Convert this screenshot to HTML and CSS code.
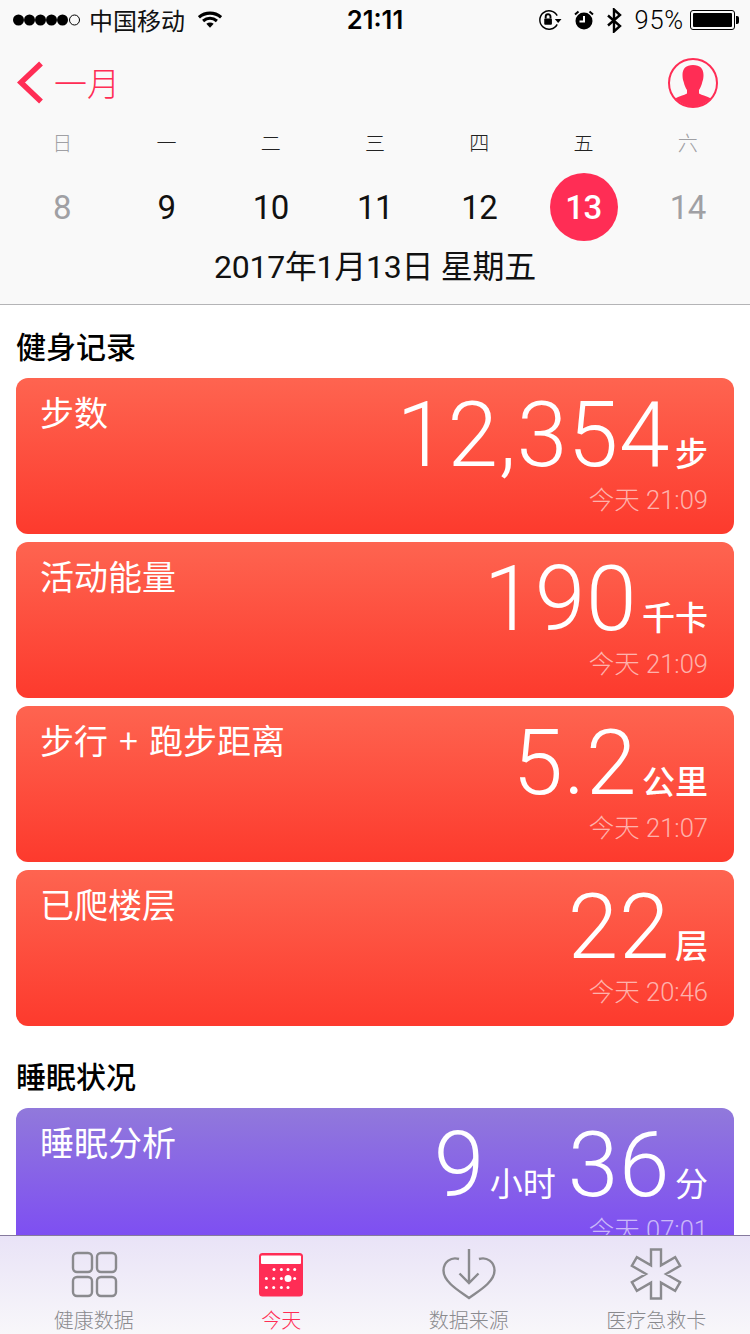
FILE: index.html
```html
<!DOCTYPE html>
<html lang="zh">
<head>
<meta charset="utf-8">
<title>健康</title>
<link rel="stylesheet" href="styles.css">
</head>
<body>
<div class="app">
  <header class="header">
    <div class="status">
      <div class="status-left">
        <svg class="signal" width="68" height="12" viewBox="0 0 68 12"><circle cx="5.500" cy="6" r="5.500"/><circle cx="16.500" cy="6" r="5.500"/><circle cx="27.500" cy="6" r="5.500"/><circle cx="38.500" cy="6" r="5.500"/><circle cx="49.500" cy="6" r="5.500"/><circle class="hollow" cx="61.500" cy="6" r="5"/></svg>
        <span class="carrier">中国移动</span>
        <svg class="wifi" width="24" height="18" viewBox="0 0 26 19"><path d="M1 6.500C8 .5 18 .5 25 6.500" /><path d="M5.500 10.500C10 6.800 16 6.800 20.500 10.500"/><path class="fill" d="M9 13.500C11.500 11.800 14.500 11.800 17 13.500L13 18Z"/></svg>
      </div>
      <div class="clock">21:11</div>
      <div class="status-right">
        <svg width="24" height="22" viewBox="0 0 25 22" class="ic"><path class="thin" d="M20 6.500A9.600 9.600 0 1 0 20 15.500"/><path class="fill" d="M17.500 10h7l-3.500 4z"/><rect class="fill" x="6.500" y="9.500" width="8" height="6.500" rx="1"/><path class="thin2" d="M8 9.500V7.500a2.500 2.500 0 0 1 5 0v2"/></svg>
        <svg width="20" height="20" viewBox="0 0 20 20" class="ic"><circle class="fill" cx="10" cy="11" r="8.500"/><path class="white" d="M10 6v5.500H5.500"/><path class="thin2" d="M1 4.500L4.500 1.500M19 4.500L15.500 1.500"/></svg>
        <svg width="16" height="25" viewBox="0 0 16 25" class="ic"><path class="thin3" d="M2 7.500L14 18 8 23.500V1.500L14 7 2 17.500"/></svg>
        <span class="battery-text">95%</span>
        <div class="battery"><div class="battery-body"><div class="battery-level"></div></div><div class="battery-tip"></div></div>
      </div>
    </div>
    <div class="nav">
      <div class="back">
        <svg width="28" height="44" viewBox="0 0 28 44"><path d="M25 2.500L5 21.500 25 40.500"/></svg>
        <span>一月</span>
      </div>
      <svg class="avatar" width="52" height="52" viewBox="0 0 52 52"><defs><clipPath id="av"><circle cx="26" cy="26" r="23.500"/></clipPath></defs><circle class="ring" cx="26" cy="26" r="24"/><path class="person" clip-path="url(#av)" d="M26 8c7 0 10.500 3.500 10.500 10 0 3-.5 5-1.200 7-.8 3.500-2 6-3.300 8v3.500c3 1.800 8 2.800 12 5V52H8V41.500c4-2.200 9-3.200 12-5V33c-1.300-2-2.500-4.500-3.300-8-.7-2-1.200-4-1.200-7 0-6.500 3.500-10 10.500-10z"/></svg>
    </div>
    <div class="week">
      <span class="muted">日</span><span>一</span><span>二</span><span>三</span><span>四</span><span>五</span><span class="muted">六</span>
    </div>
    <div class="days">
      <span class="day muted">8</span><span class="day">9</span><span class="day">10</span><span class="day">11</span><span class="day">12</span><span class="day"><b class="today">13</b></span><span class="day muted">14</span>
    </div>
    <div class="full-date">2017年1月13日 星期五</div>
  </header>

  <main class="content">
    <h2 class="section">健身记录</h2>
    <div class="cards">
      <article class="card red">
        <div class="card-title">步数</div>
        <div class="card-data">
          <div class="value"><span class="num">12,354</span><span class="unit">步</span></div>
          <div class="time">今天 21:09</div>
        </div>
      </article>
      <article class="card red">
        <div class="card-title">活动能量</div>
        <div class="card-data">
          <div class="value"><span class="num">190</span><span class="unit">千卡</span></div>
          <div class="time">今天 21:09</div>
        </div>
      </article>
      <article class="card red">
        <div class="card-title">步行 + 跑步距离</div>
        <div class="card-data">
          <div class="value"><span class="num">5.2</span><span class="unit">公里</span></div>
          <div class="time">今天 21:07</div>
        </div>
      </article>
      <article class="card red">
        <div class="card-title">已爬楼层</div>
        <div class="card-data">
          <div class="value"><span class="num">22</span><span class="unit">层</span></div>
          <div class="time">今天 20:46</div>
        </div>
      </article>
    </div>
    <h2 class="section second">睡眠状况</h2>
    <div class="cards">
      <article class="card purple">
        <div class="card-title">睡眠分析</div>
        <div class="card-data">
          <div class="value"><span class="num">9</span><span class="unit">小时</span><span class="num gap">36</span><span class="unit">分</span></div>
          <div class="time">今天 07:01</div>
        </div>
      </article>
    </div>
  </main>

  <nav class="tabbar">
    <div class="tab">
      <svg width="52" height="52" viewBox="0 0 52 52" class="tab-icon"><rect x="5" y="5" width="19" height="19" rx="4"/><rect x="29" y="5" width="19" height="19" rx="4"/><rect x="5" y="29" width="19" height="19" rx="4"/><rect x="29" y="29" width="19" height="19" rx="4"/></svg>
      <span>健康数据</span>
    </div>
    <div class="tab active">
      <svg width="52" height="52" viewBox="0 0 52 52"><rect class="cal" x="4" y="5" width="44" height="43.500" rx="3.500"/><rect class="calw" x="6" y="7.500" width="40" height="8.500" rx="1"/><g class="calw"><circle cx="19" cy="21.500" r="1.500"/><circle cx="26.400" cy="21.500" r="1.500"/><circle cx="33" cy="21.500" r="1.500"/><circle cx="39.700" cy="21.500" r="1.500"/><circle cx="11.400" cy="30.500" r="1.500"/><circle cx="18.700" cy="30.500" r="1.500"/><circle cx="26.400" cy="30.500" r="1.500"/><circle cx="33" cy="30.500" r="3.500"/><circle cx="39.700" cy="30.500" r="1.500"/><circle cx="11.400" cy="39.500" r="1.500"/><circle cx="18.700" cy="39.500" r="1.500"/><circle cx="26.400" cy="39.500" r="1.500"/><circle cx="33" cy="39.500" r="1.500"/></g></svg>
      <span>今天</span>
    </div>
    <div class="tab">
      <svg width="56" height="52" viewBox="0 0 56 52" class="tab-icon"><path d="M18 11C10 8.500 2.500 14 2.500 22.500c0 5.500 3 9.500 7 13.500 5 5 11.500 9 18.500 14 7-5 13.500-9 18.500-14 4-4 7-8 7-13.500C53.500 14 46 8.500 38 11"/><path d="M28 1V35M18.500 25.500L28 35l9.500-9.500"/></svg>
      <span>数据来源</span>
    </div>
    <div class="tab">
      <svg width="54" height="52" viewBox="0 0 54 52" class="tab-icon"><path d="M22 1.500h10V17.340L46.150 9.170l5 8.660L37 26l14.150 8.170-5 8.660L32 34.660V50.500H22V34.660L7.850 42.830l-5-8.660L17 26 2.850 17.830l5-8.660L22 17.340z"/></svg>
      <span>医疗急救卡</span>
    </div>
  </nav>
</div>
</body>
</html>
```

FILE: styles.css
```css
* { box-sizing: border-box; }
html, body { margin: 0; padding: 0; }
body {
  width: 750px;
  height: 1334px;
  overflow: hidden;
  background: #fff;
  font-family: "Noto Sans CJK SC", "Liberation Sans", sans-serif;
  color: #000;
}
.app { width: 750px; height: 1334px; display: flex; flex-direction: column; overflow: hidden; }

.header { flex: none; height: 305px; background: #f9f9f9; border-bottom: 1px solid #b4b4b6; }

.status { height: 40px; display: flex; align-items: center; justify-content: space-between; padding: 0 11px 0 13px; position: relative; }
.status-left, .status-right { display: flex; align-items: center; }
.signal { fill: #000; display: block; }
.signal .hollow { fill: none; stroke: #000; stroke-width: 1; }
.carrier { font-size: 24px; line-height: 40px; margin-left: 8px; color: #111; }
.wifi { margin-left: 13px; }
.wifi path { fill: none; stroke: #000; stroke-width: 3.400; }
.wifi path.fill { fill: #000; stroke: none; }
.clock { position: absolute; left: 0; right: 0; text-align: center; font: 600 25.500px/40px Inter, "Liberation Sans", sans-serif; }
.status-right { gap: 12px; }
.ic .fill { fill: #000; }
.ic .thin { fill: none; stroke: #000; stroke-width: 1.500; }
.ic .thin2 { fill: none; stroke: #000; stroke-width: 2; }
.ic .thin3 { fill: none; stroke: #000; stroke-width: 2.400; }
.ic .white { fill: none; stroke: #fff; stroke-width: 2; }
.battery-text { font: 300 25.500px/40px Roboto, "Liberation Sans", sans-serif; letter-spacing: .8px; margin-right: -6px; }
.battery { display: flex; align-items: center; }
.battery-body { width: 45px; height: 20px; border: 1px solid #000; border-radius: 3px; padding: 2px; }
.battery-level { width: 100%; height: 100%; background: #000; border-radius: 1px; }
.battery-tip { width: 3px; height: 8px; background: #000; border-radius: 0 2px 2px 0; margin-left: 1px; }

.nav { height: 85px; display: flex; align-items: center; justify-content: space-between; padding: 0 31px 0 16px; }
.back { display: flex; align-items: center; color: #ff2d55; font-size: 33px; font-weight: 300; }
.back svg { display: block; }
.back path { fill: none; stroke: #ff2d55; stroke-width: 5.500; }
.back span { margin-left: 10px; line-height: 42px; padding-bottom: 2px; }
.avatar { display: block; }
.avatar .ring { fill: #f9f9f9; stroke: #ff2d55; stroke-width: 2; }
.avatar .person { fill: #ff2d55; }

.week, .days { display: grid; grid-template-columns: repeat(7, 1fr); padding: 0 10px; text-align: center; }
.week { height: 38px; font-size: 20px; line-height: 38px; color: #222; font-weight: 300; margin-top: -1px; }
.days { height: 78px; margin-top: 6px; align-items: center; font: 400 33px/1 Roboto, sans-serif; letter-spacing: -.5px; color: #111; }
.day { display: flex; justify-content: center; align-items: center; height: 68px; }
.week .muted, .muted { color: #a0a0a4; }
.today { width: 68px; height: 68px; border-radius: 50%; background: #ff2d55; color: #fff; font-weight: 500; font-size: 33px; display: flex; align-items: center; justify-content: center; }
.full-date { text-align: center; font: 400 32px/44px Roboto, "Noto Sans CJK SC", sans-serif; letter-spacing: -.28px; margin-top: -1px; color: #111; }

.content { flex: 1 1 auto; min-height: 0; overflow: hidden; padding: 0 16px; background: #fff; }
.section { margin: 0; font-size: 30px; font-weight: 500; line-height: 40px; padding-top: 20px; height: 73px; }
.section.second { height: 82px; padding-top: 29px; }
.cards { display: flex; flex-direction: column; gap: 8px; }
.card { flex: none; height: 156px; border-radius: 12px; display: flex; justify-content: space-between; color: #fff; padding: 9px 26px 0 24px; }
.red { background: linear-gradient(#fe6450, #fd3a2d); }
.purple { background: linear-gradient(#9179db, #7a45f7); }
.card-title { font-size: 34px; line-height: 50px; word-spacing: 3.500px; }
.card-data { display: flex; flex-direction: column; align-items: flex-end; }
.value { display: flex; align-items: baseline; height: 93px; margin-top: 2px; }
.num { font: 300 91px/92px Roboto, sans-serif; letter-spacing: .6px; }
.num.gap { margin-left: 12px; }
.unit { font-size: 33px; line-height: 40px; margin-left: 5px; font-weight: 500; }
.purple .unit { font-weight: 400; }
.time { font: 300 25.500px/36px Roboto, "Noto Sans CJK SC", sans-serif; color: rgba(255,255,255,.6); }

.tabbar { flex: none; height: 99px; display: grid; grid-template-columns: repeat(4, 1fr); border-top: 1px solid rgba(40,20,80,.55); background: linear-gradient(#e9e3f7, #f8f7fa); }
.tab { display: flex; flex-direction: column; align-items: center; padding-top: 12px; color: #8a8a8e; font-size: 20px; line-height: 30px; font-weight: 300; }
.tab svg { display: block; height: 52px; }
.tab span { margin-top: 5px; }
.tab-icon * { fill: none; stroke: #8a8a8e; stroke-width: 2.400; }
.tab.active { color: #ff2d55; }
.cal { fill: #ff2d55; }
.calw, .calw circle { fill: #fff; }
```
